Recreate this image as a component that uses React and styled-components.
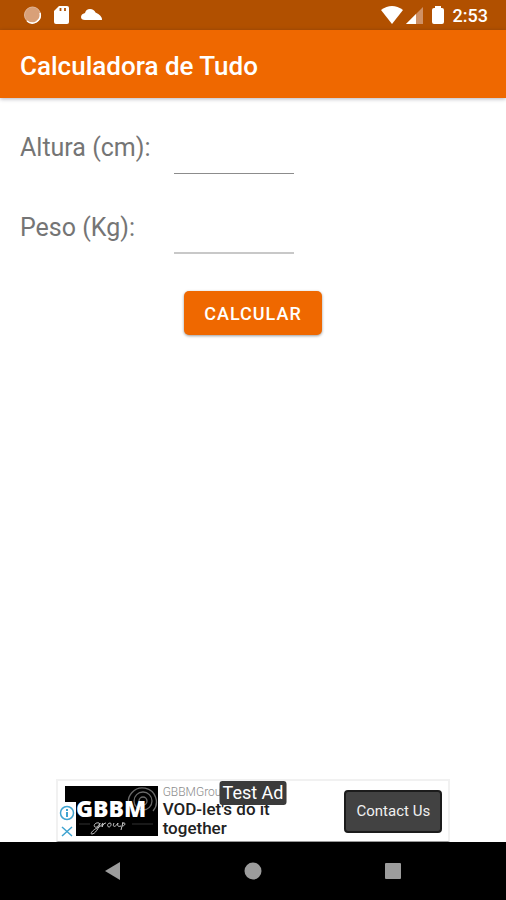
import React from 'react';
import styled, { createGlobalStyle } from 'styled-components';

const colour = {
  primary: '#ef6800',
  primaryDarker: '#b15000',
  text: '#757575',
  white: '#fff',
  black: '#000',
  nav: '#9c9c9c',
  info: '#3fa3d0',
};

const GlobalStyle = createGlobalStyle`
  *, *::before, *::after {
    box-sizing: border-box;
  }
  body {
    margin: 0;
    background: ${colour.white};
    font-family: Roboto, "Liberation Sans", sans-serif;
  }
`

const Screen = styled.div`
  min-height: 100vh;
  display: flex;
  flex-direction: column;
`

const StatusBar = styled.div`
  height: 30px;
  padding: 0 18px 0 23px;
  display: flex;
  align-items: center;
  justify-content: space-between;
  background: ${colour.primaryDarker};
  color: ${colour.white};
`

const StatusGroup = styled.div`
  display: flex;
  align-items: center;
  gap: ${props => props.$gap}px;
  svg {
    display: block;
  }
`

const Clock = styled.time`
  font-size: 18px;
  line-height: 20px;
  font-weight: 500;
  margin-top: 2px;
`

const AppBar = styled.header`
  height: 68px;
  padding: 4px 20px 0;
  display: flex;
  align-items: center;
  background: ${colour.primary};
  box-shadow: 0 1px 4px rgba(0, 0, 40, .3);
`

const Title = styled.h1`
  margin: 0;
  color: ${colour.white};
  font-size: 26px;
  line-height: 32px;
  font-weight: 500;
`

const Form = styled.form`
  flex: 1;
  padding: 24px 20px;
  display: flex;
  flex-direction: column;
  gap: 28px;
`

const Field = styled.div`
  height: 52px;
  display: grid;
  grid-template-columns: 154px 120px;
  align-items: center;
`

const Label = styled.label`
  color: ${colour.text};
  font-size: 25px;
  line-height: 32px;
`

const Input = styled.input`
  width: 100%;
  height: 100%;
  padding: 0 4px;
  border: 0;
  border-bottom: ${props => props.$line};
  outline: none;
  background: transparent;
  color: ${colour.text};
  font: inherit;
  font-size: 24px;
`

const Button = styled.button`
  align-self: center;
  height: 44px;
  margin-top: 9px;
  padding: 0 20px;
  border: 0;
  border-radius: 5px;
  background: ${colour.primary};
  box-shadow: 0 1px 3px rgba(0, 0, 0, .4);
  color: ${colour.white};
  font: inherit;
  font-size: 18px;
  font-weight: 500;
  letter-spacing: 1px;
  text-transform: uppercase;
  cursor: pointer;
`

const Ad = styled.aside`
  position: relative;
  align-self: center;
  width: 78%;
  height: 63px;
  padding: 0 6px 0 7px;
  display: flex;
  align-items: center;
  border: 2px solid #f1f1f1;
  border-bottom: 1px solid #999;
`

const AdLogo = styled.svg`
  flex: none;
  display: block;
`

const AdText = styled.div`
  flex: 1;
  padding-left: 5px;
`

const AdBrand = styled.div`
  color: #8c8c8c;
  font-size: 12px;
  line-height: 16px;
  font-weight: 300;
`

const AdHeadline = styled.div`
  color: #222;
  font-size: 17px;
  line-height: 19px;
  font-weight: 500;
`

const AdAction = styled.a`
  flex: none;
  width: 98px;
  height: 43px;
  display: flex;
  align-items: center;
  justify-content: center;
  border: 2px solid #1c1c1c;
  border-radius: 4px;
  background: #424242;
  color: #f0f0f0;
  font-size: 15px;
  text-decoration: none;
`

const AdTag = styled.span`
  position: absolute;
  top: 0;
  left: 50%;
  transform: translateX(-50%);
  padding: 0 3px;
  border-radius: 3px;
  background: #3b3b3b;
  color: ${colour.white};
  font-size: 18px;
  line-height: 24px;
  white-space: nowrap;
`

const AdChoices = styled.div`
  position: absolute;
  left: 0;
  bottom: 0;
  width: 18px;
  padding: 3px 0 2px;
  background: ${colour.white};
  svg {
    display: block;
    margin: 0 auto;
  }
`

const NavBar = styled.nav`
  height: 58px;
  padding: 0 43px;
  display: flex;
  align-items: center;
  background: ${colour.black};
`

const NavButton = styled.button`
  flex: 1;
  height: 100%;
  padding: 0;
  display: flex;
  align-items: center;
  justify-content: center;
  border: 0;
  background: transparent;
  color: ${colour.nav};
  cursor: pointer;
`

const Logo = () => (
  <AdLogo width="93" height="50" viewBox="0 0 93 50" aria-label="GBBM group">
    <rect width="93" height="50" fill="#000" />
    <g fill="none" stroke="#6a6a6a" strokeWidth="1.3">
      <circle cx="78" cy="15" r="4" />
      <circle cx="78" cy="15" r="9" />
      <path d="M64 20a14 14 0 1 1 24 5" />
    </g>
    <text x="11" y="31" fill="#fff" fontFamily="Open Sans, sans-serif" fontSize="23" fontWeight="800">GBBM</text>
    <path d="M14 38h11M67 38h21" stroke="#333" />
    <path
      d="M34 37c-4-1-6 3-4 4s4-2 5-4c-1 5-5 11-8 11s2-5 7-7c3-1 3-4 4-4l-1 4c1-3 3-4 4-4M45 37c-3 0-3 4-1 4s3-4 1-4M49 37c-2 4 1 5 4 0-1 3 0 4 3 3M58 36l-2 8M57 38c4-3 4 2 0 2"
      fill="none"
      stroke="#c9c9c9"
      strokeWidth="1"
    />
  </AdLogo>
)

const StatusIcons = () => (
  <StatusGroup $gap={12}>
    <svg width="19" height="20" viewBox="0 0 19 20">
      <circle cx="9.5" cy="10" r="8" fill="#d9a078" stroke="#e1b698" />
      <path d="M17 8a8 8 0 0 1-13 8" fill="none" stroke="#fff" strokeWidth="1.5" />
    </svg>
    <svg width="15" height="20" viewBox="0 0 15 20">
      <path d="M5 1h8q2 0 2 2v14q0 2-2 2H2q-2 0-2-2V6z" fill="#fff" />
      <path d="M6.5 3v3M11 3v3" stroke={colour.primaryDarker} strokeWidth="1.8" />
    </svg>
    <svg width="21" height="20" viewBox="0 0 21 20">
      <path d="M4 15Q0 15 0 12Q0 9 4 8Q5 4 9 4Q13 4 14.500 7.500Q21 10 21 15z" fill="#fff" />
    </svg>
  </StatusGroup>
)

const SignalIcons = () => (
  <StatusGroup $gap={9}>
    <StatusGroup $gap={3}>
      <svg width="22" height="18" viewBox="0 0 22 18">
        <path d="M0 4Q11-4 22 4L11 18z" fill="#fff" />
      </svg>
      <svg width="17" height="18" viewBox="0 0 17 18">
        <path d="M0 18L17 1v17z" fill="#cf9166" />
        <path d="M0 18L10 8v10z" fill="#fff" />
      </svg>
    </StatusGroup>
    <svg width="12" height="20" viewBox="0 0 12 20">
      <path d="M3 1h6v2h1q2 0 2 2v12q0 2-2 2H2q-2 0-2-2V5q0-2 2-2h1z" fill="#fff" />
    </svg>
    <Clock>2:53</Clock>
  </StatusGroup>
)


const App = () => {
  return (
    <Screen>
      <GlobalStyle />
      <StatusBar>
        <StatusIcons />
        <SignalIcons />
      </StatusBar>
      <AppBar>
        <Title>Calculadora de Tudo</Title>
      </AppBar>
      <Form onSubmit={e => e.preventDefault()}>
        <Field>
          <Label htmlFor="altura">Altura (cm):</Label>
          <Input id="altura" inputMode="numeric" $line="1px solid #8c8c8c" />
        </Field>
        <Field>
          <Label htmlFor="peso">Peso (Kg):</Label>
          <Input id="peso" inputMode="numeric" $line="2px solid #c8c8c8" />
        </Field>
        <Button type="submit">Calcular</Button>
      </Form>
      <Ad>
        <Logo />
        <AdText>
          <AdBrand>GBBMGroup</AdBrand>
          <AdHeadline>VOD-let's do it<br />together</AdHeadline>
        </AdText>
        <AdAction href="#contact">Contact Us</AdAction>
        <AdTag>Test Ad</AdTag>
        <AdChoices>
          <svg width="16" height="34" viewBox="0 0 16 34" fill="none" stroke={colour.info} strokeWidth="1.5">
            <circle cx="8" cy="8" r="6.5" />
            <path d="M8 7v5M8 4v2" strokeWidth="2" />
            <path d="M3 22l10 9M13 22L3 31" />
          </svg>
        </AdChoices>
      </Ad>
      <NavBar>
        <NavButton aria-label="Back">
          <svg width="16" height="18" viewBox="0 0 16 18"><path d="M0 9L15 0v18z" fill="currentColor" /></svg>
        </NavButton>
        <NavButton aria-label="Home">
          <svg width="18" height="18" viewBox="0 0 18 18"><circle cx="9" cy="9" r="8.5" fill="currentColor" /></svg>
        </NavButton>
        <NavButton aria-label="Overview">
          <svg width="16" height="16" viewBox="0 0 16 16"><rect width="16" height="16" rx="1" fill="currentColor" /></svg>
        </NavButton>
      </NavBar>
    </Screen>
  )
}

export default App;
